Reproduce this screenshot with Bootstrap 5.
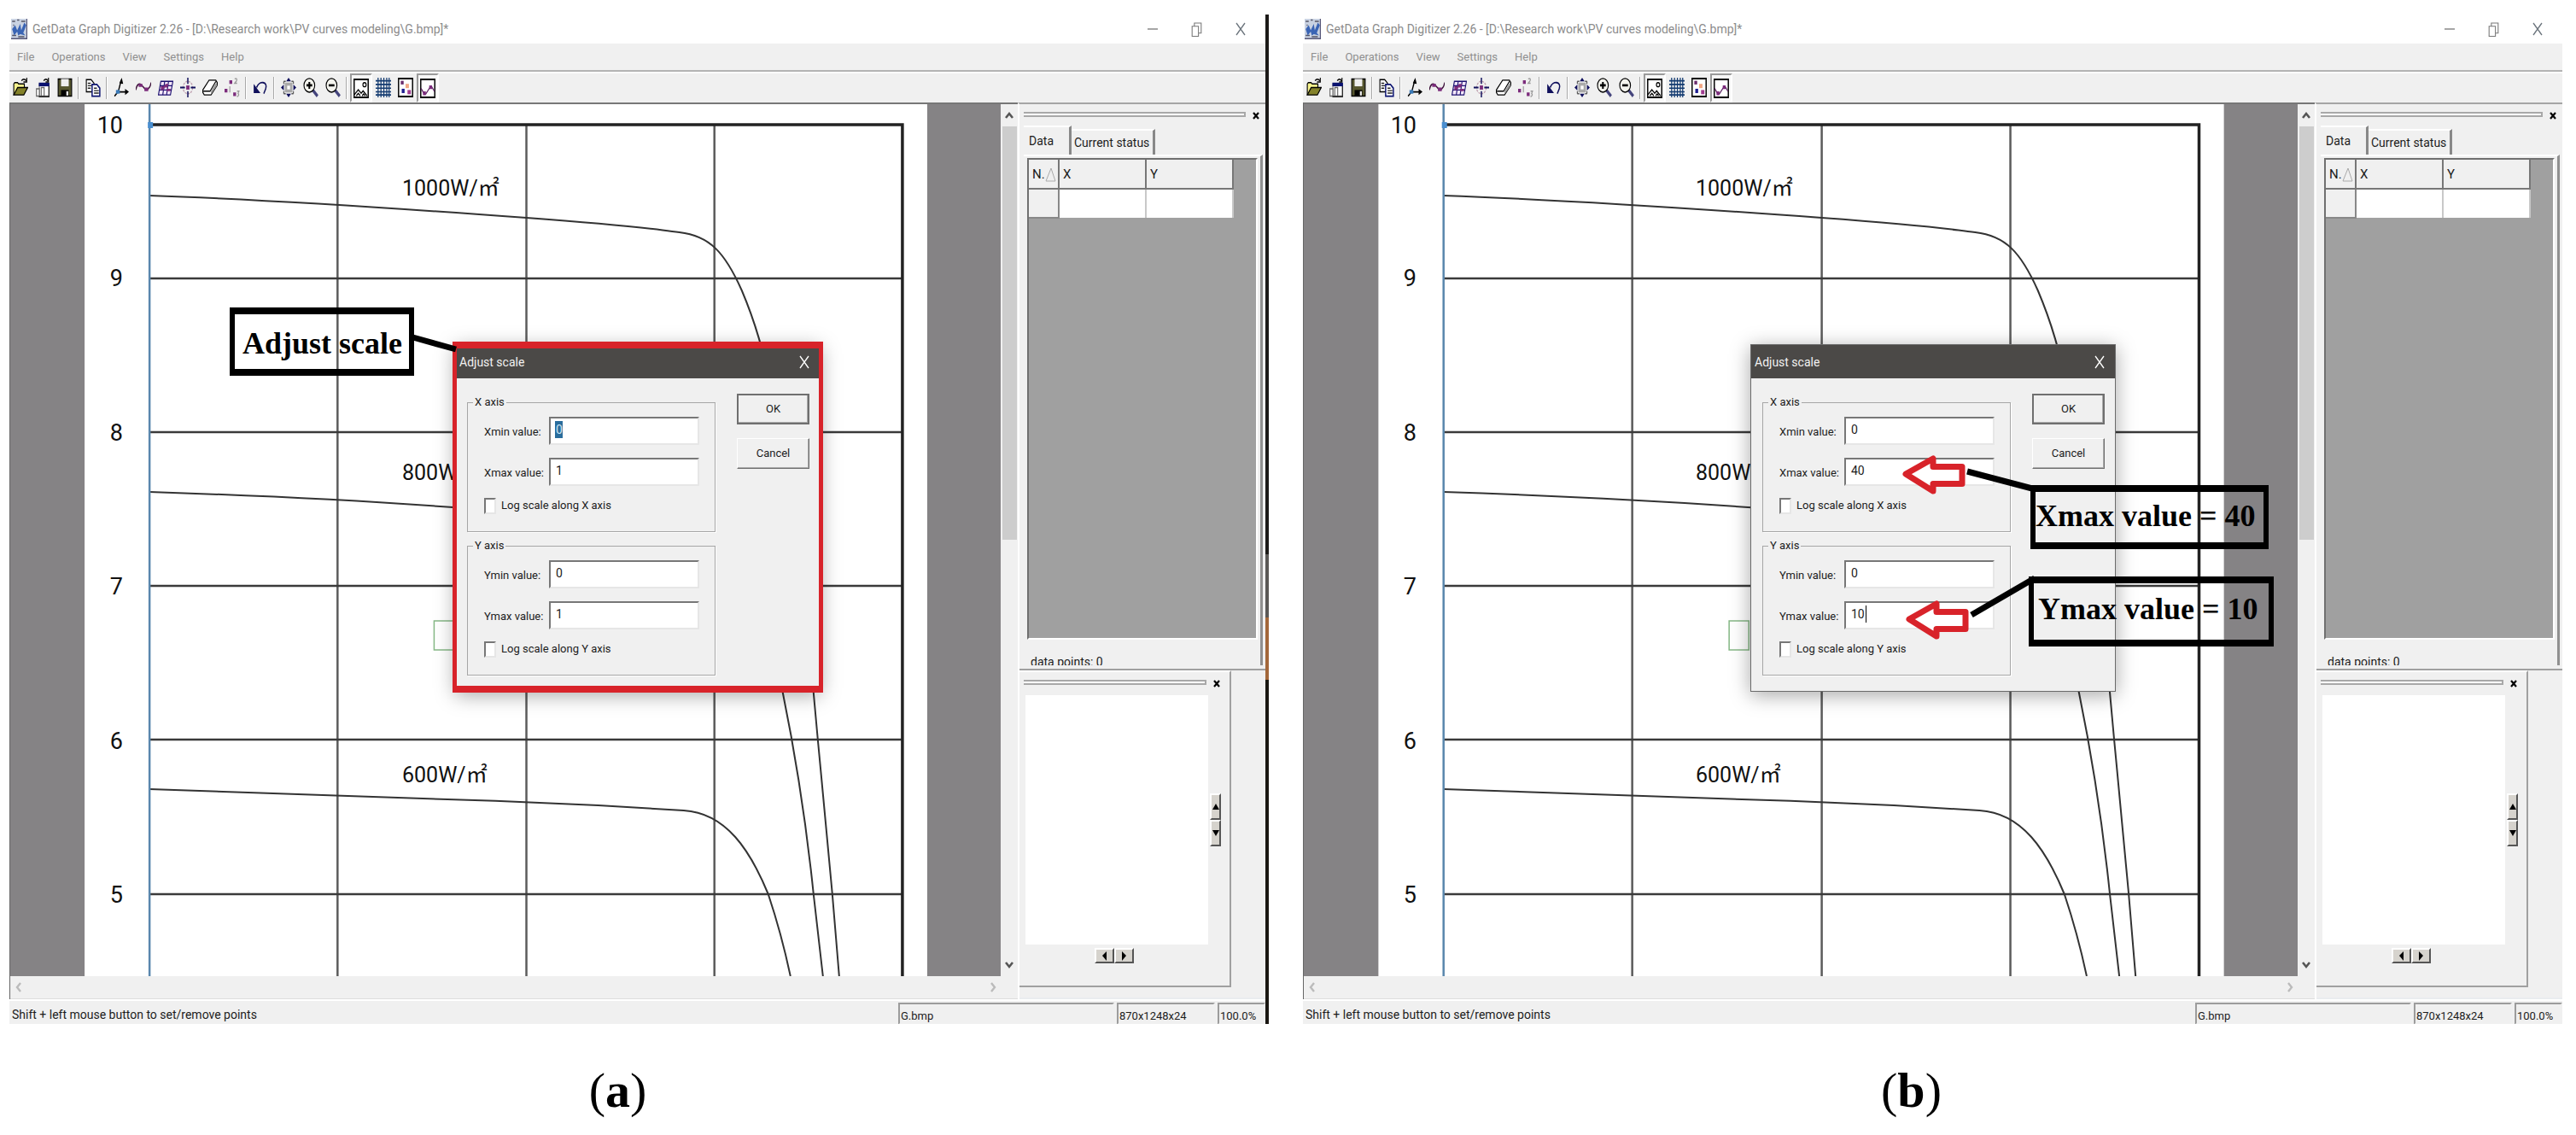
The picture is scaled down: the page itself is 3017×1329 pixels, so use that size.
<!DOCTYPE html>
<html lang="en">
<head>
<meta charset="utf-8">
<meta name="viewport" content="width=device-width, initial-scale=1">
<title>GetData Graph Digitizer – Adjust scale</title>
<link rel="stylesheet" href="https://cdn.jsdelivr.net/npm/bootstrap@5.3.0/dist/css/bootstrap.min.css">
<style>
body{font-family:Roboto,"Liberation Sans","Noto Sans CJK JP",sans-serif;color:#1c1c1c;background:#fff;line-height:20px}
.figures{padding:17px 16px 0 11px;gap:40px}
.pane{min-width:0}
.app{background:#f0f0f0}
.app-a{border-right:4px solid;border-image:linear-gradient(#1c1a18 0 632px,#5a5856 632px 706px,#a3673a 706px 779px,#1a1712 779px) 1}
.titlebar{height:34px;background:#fff;color:#8c8c8c;font-size:14px;padding:0 23px 0 2px}
.titlebar .app-icon{width:19px;height:24px;margin-right:6px}
.win-btns{gap:39px}
.win-btns button,.plain{border:0;background:none;padding:0;line-height:0}
.menubar{height:33px;border-bottom:2px solid #b4b4b4;font-size:13px;gap:20px;padding-left:9px}
.menubar a{color:#8f8f8f;text-decoration:none}
.toolbar{height:36px;border-top:2px solid #fbfbfb}
.tool{width:26px;height:34px;border:0;background:none;padding:0 0 2px;line-height:0}
.tool svg{width:18px;height:23px}
.tool.pressed{border:2px solid;border-color:#9a9a9a #fff #fff #9a9a9a;background:#f7f7f7;padding:0}
.tsep{width:2px;height:26px;margin:0 3px 0 2px;background:#a8a8a8;border-right:1px solid #fff}
.viewer{min-width:0;border-left:1px solid #666;border-top:2px solid #777}
.canvas{background:#858385;overflow:hidden;min-width:0}
.plot,.plot svg{display:block}
.vscroll{width:20px;background:#f0f0f0}
.vthumb{height:484px;width:17px;background:#cdcdcd}
.hscroll{height:27px;border-bottom:1px solid #ddd;padding:0 25px 0 6px}
.side{width:290px;border-left:2px solid #fff;border-top:2px solid #a5a5a5}
.grip{height:6px;border-top:2px solid #a8a8a8;border-bottom:2px solid #a8a8a8;border-right:2px solid #a8a8a8;background:#fff}
.side-head{padding:9px 7px 0 5px;height:25px}
.data-tabs{padding-left:5px;border:0}
.data-tabs .nav-link{border:0;border-radius:0;color:#1c1c1c;font-size:14px;line-height:20px;background:#f0f0f0;border-top:2px solid #fff;border-right:3px solid #888;padding:0 4px 0 3px;height:30px}
.data-tabs .nav-link.active{height:34px;width:56px;text-align:left;color:#1c1c1c;background:#f0f0f0;border-top:2px solid #fff;border-right:3px solid #888;padding-left:6px}
.tabpage{margin:0 3px 0 5px;border-top:2px solid #fff;border-right:3px solid #909090;overflow:hidden;height:598px;font-size:14px}
.databox{height:564px;margin:2px 3px 0 4px;background:#a0a0a0;border:2px solid;border-color:#707070 #fff #fff #707070}
.datagrid{width:239px;table-layout:fixed;border-collapse:collapse;font-size:15px;line-height:20px;margin:0;white-space:nowrap}
.datagrid th{background:#f0f0f0;height:34px;font-weight:400;padding:0 0 0 4px;border-right:2px solid #777;border-bottom:2px solid #777}
.datagrid td{background:#fff;height:34px;border-right:2px solid #c8c8c8}
.datagrid tbody th{border-color:#888}
.mag{width:248px;border-right:2px solid #a0a0a0;border-bottom:2px solid #a0a0a0;border-top:2px solid #fff}
.mag .side-head{height:27px}
.rule-top{border-top:2px solid #a0a0a0}
.magview{background:#fff;width:214px;height:292px;margin:0 2px 0 7px}
.spin{background:#d6d3cd;border:2px solid;border-color:#fff #555 #555 #fff;padding:0;line-height:0}
.spin.v{width:13px;height:31px}.spin.h{width:23px;height:18px}
.statusbar{height:29px;border-top:2px solid #fff;font-size:13px;overflow:hidden}
.statusmsg{font-size:14px;padding:5px 0 0 3px}
.cell-s{border:2px solid;border-color:#9c9c9c transparent transparent #9c9c9c;margin-top:3px;padding:4px 0 0 1px;height:26px}
.cell-1{width:253px;margin-right:3px}.cell-2{width:115px;margin-right:3px}.cell-3{width:56px}
.caption-row{height:130px;padding-right:50px;font-family:"Liberation Serif",serif;font-size:58px;line-height:56px;color:#000;padding-top:50px}
/* dialog window floating on the canvas */
.dlg{position:absolute;left:521px;top:281px;width:428px;background:#f0f0f0;border:1px solid #6a6a6a;box-shadow:0 4px 22px rgba(0,0,0,.35);font-size:13px}
.dlg-b{left:523px}
.dlg-title{background:#4b4947;color:#f2f2f2;height:39px;font-size:14px;padding:0 12px 0 4px}
.dlg-body{padding:18px 12px 18px 13px;gap:25px}
.axisbox{width:291px;border:1px solid #a6a6a6;box-shadow:1px 1px 0 #fff;padding:7px 18px 20px 6px;margin:0 0 6px;min-width:0}
.axisbox legend{float:none;width:auto;font-size:13px;line-height:20px;margin:0;padding:0 2px}
.vrow,.crow{margin-left:13px}
.vrow{height:33px;margin-bottom:15px}
.vrow+.vrow{margin-bottom:13px}
.vrow label{width:76px;padding-top:2px;white-space:nowrap}
.vrow input{width:176px;height:33px;border:2px solid;border-color:#777 #e6e6e6 #e6e6e6 #777;background:#fff;border-radius:0;padding:0 0 4px 6px;font-size:14px;color:#1c1c1c}
.vrow input.picked{background:linear-gradient(#2a6d9c,#2a6d9c) 5px 3px/9px 20px no-repeat #fff;color:#cfe6f5}
.vrow input.caret{background:linear-gradient(#000,#000) 23px 3px/1px 20px no-repeat #fff}
.crow{height:20px;gap:6px}
.crow input{appearance:none;width:14px;height:19px;margin:0;background:#fff;border:2px solid;border-color:#777 #e6e6e6 #e6e6e6 #777}
.dbtn{width:85px;height:36px;background:#f0f0f0;border:1px solid;border-color:#fff #6f6f6f #6f6f6f #fff;box-shadow:inset -1px -1px 0 #aaa;font-size:13px;color:#1c1c1c;padding:0}
.dbtn.ok{border:2px solid #6f6f6f}
.frame{position:absolute;left:518px;top:278px;width:434px;height:411px;border:solid #d8232a;border-width:8px 5px}
.note{position:absolute;border:solid #000;border-width:8px 6px;font:700 36px/64px "Liberation Serif",serif;color:#000;white-space:nowrap}
.note-adj{left:257px;top:238px;width:216px;height:80px;padding-left:9px;line-height:68px}
.note-x{left:851px;top:446px;width:279px;height:75px;line-height:56px}
.note-y{left:849px;top:553px;width:287px;height:82px;padding-left:5px;line-height:60px}
.marks{position:absolute;left:0;top:0;width:100%;height:100%;pointer-events:none}
</style>
<script src="https://cdn.jsdelivr.net/npm/bootstrap@5.3.0/dist/js/bootstrap.bundle.min.js"></script>
</head>
<body>
<svg width="0" height="0" class="position-absolute" aria-hidden="true">
<defs>
<symbol id="i-app" viewBox="0 0 16 16" preserveAspectRatio="none"><path fill="#c9d2e2" d="M0 0h16v16H0z"/><path d="M1 2h3M6 1h2M10 2h4M2 5h1M1 13h4M7 14h6" stroke="#556" fill="none"/><path d="M1 8l3-3 2 4 3-5 1 5 3-6 2 2-3 6 2 2-5-1-2 1-1-3-3 3z" fill="#3a64b4"/><path d="M15 0v15H0v1h16V0z" fill="#557"/></symbol>
<symbol id="i-open" viewBox="0 0 16 16" preserveAspectRatio="none"><path d="M1 14V5l1-1h3l1 1h6v3" fill="#f7f38c" stroke="#000"/><path d="M1 14l4-6h10.500l-4 6z" fill="#84822a" stroke="#000"/><path d="M9 2.500q2.500-2.500 5 0M14.500 0v3.500H11" fill="none" stroke="#000"/></symbol>
<symbol id="i-import" viewBox="0 0 16 16" preserveAspectRatio="none"><path d="M4.500 5h10v10h-10z" fill="#fff" stroke="#777"/><path d="M4 4h11v3H4z" fill="#0a1270"/><path d="M1.500 9h3v6h-3zM6.500 8h3v7h-3z" fill="#fff" stroke="#666"/><path d="M14.500 7v8.500H4" fill="none" stroke="#222"/><path d="M9 2.500q2.500-2.500 4.500 0M14 0v3.500H11" fill="none" stroke="#000"/></symbol>
<symbol id="i-save" viewBox="0 0 16 16" preserveAspectRatio="none"><path d="M1 1h14v14H1z" fill="#55552e" stroke="#000"/><path d="M4 1h8v6H4z" fill="#eee"/><path d="M4 10h8v5H4z" fill="#000"/><path d="M9.500 11h2v3.500h-2z" fill="#eee"/></symbol>
<symbol id="i-copy" viewBox="0 0 16 16" preserveAspectRatio="none"><path d="M1 1.500h5l3 3v7H1z" fill="#fff" stroke="#000"/><path d="M7 5.500h5l3 3v6.500H7z" fill="#fff" stroke="#0a1270" stroke-width="1.300"/><path d="M2.500 4.500h3M2.500 6.500h4M2.500 8.500h3M9 8.500h3M9 10.500h5M9 12.500h5" stroke="#222"/></symbol>
<symbol id="i-axes" viewBox="0 0 16 16" preserveAspectRatio="none"><path d="M1 15l4-4M5 11L8 2M5 11.500h9" stroke="#000" stroke-width="1.200" fill="none"/><path d="M6 4.500L8.500 0l1.500 5zM12 9l4 2.500-4 2.500z"/><path d="M2.500 10h4v3h-4z" fill="#3a7ab8"/></symbol>
<symbol id="i-curve" viewBox="0 0 16 16" preserveAspectRatio="none"><path d="M0 10c1-4 3-6 6-4s4 5 7 3 2-3 3-5" stroke="#3b1038" fill="none" stroke-width="1.200"/><path d="M3 5h4v2.500H3zM9 8h4v3H9z" fill="#7c2c7c"/></symbol>
<symbol id="i-warp" viewBox="0 0 16 16" preserveAspectRatio="none"><path d="M3 3h12.500L13 14H.5z" fill="#f4e8fa"/><path d="M3 3h12.500L13 14H.5zM2 6.500h13M1 10h13M7 3L5 14M11 3L9 14" stroke="#1c1070" fill="none"/><path d="M3 7h3l2-2h3l-1 3H7l-1 2H3zM9 9h4v2H9z" fill="#7c2c7c"/></symbol>
<symbol id="i-target" viewBox="0 0 16 16" preserveAspectRatio="none"><circle cx="8" cy="8" r="5" fill="none" stroke="#b9a" stroke-dasharray="2 1"/><path d="M8 0v5M8 11v5M0 8h5M11 8h5" stroke="#10105c" stroke-width="1.300"/><path d="M6.300 6.300h3.400v3.400H6.300z" fill="#7c2c7c"/></symbol>
<symbol id="i-eraser" viewBox="0 0 16 16" preserveAspectRatio="none"><path d="M7 2h7l1.500 2v2L9 14H2l-1.500-2v-2z" fill="#fff" stroke="#000"/><path d="M1 11h7l6-8" fill="none" stroke="#000"/><path d="M9 11l5.500-7 1 2L9 13.500z" fill="#999"/></symbol>
<symbol id="i-order" viewBox="0 0 16 16" preserveAspectRatio="none"><path d="M5 2h3v3H5zM0 9h3v3H0zM9 12h3v3H9z" fill="#7c2c7c"/><path d="M10.500 1q3-1 2 1.500L10.500 4.500H13M5.500 7v5M13 11h2l-1 2q2 1-1 2.500" stroke="#999" fill="none"/></symbol>
<symbol id="i-undo" viewBox="0 0 16 16" preserveAspectRatio="none"><path d="M4 8c3-6 12-5 9.500 1l-2 4" stroke="#10105c" stroke-width="1.300" fill="none"/><path d="M1 5v7.500h7z" fill="#10105c"/></symbol>
<symbol id="i-pan" viewBox="0 0 16 16" preserveAspectRatio="none"><path d="M8 0l2.500 3h-5zM8 16l2.500-3h-5zM0 8l3-2.500v5zM16 8l-3-2.500v5z" fill="#10105c"/><path d="M4 4h8v8H4z" fill="#aaa"/><path d="M6.500 6.500h3v3h-3z" fill="#fff"/><path d="M3 3h2M3 3v2M13 3h-2M13 3v2M3 13h2M3 13v-2M13 13h-2M13 13v-2" stroke="#555"/></symbol>
<symbol id="i-zin" viewBox="0 0 16 16" preserveAspectRatio="none"><path d="M10 10l5 5" stroke="#44447c" stroke-width="2.600"/><circle cx="6.500" cy="6.200" r="5.600" fill="#f4f4ee" stroke="#000"/><path d="M3.500 6.200h6M6.500 3.500v5.500" stroke="#000" stroke-width="1.800"/></symbol>
<symbol id="i-zout" viewBox="0 0 16 16" preserveAspectRatio="none"><path d="M10 10l5 5" stroke="#44447c" stroke-width="2.600"/><circle cx="6.500" cy="6.200" r="5.600" fill="#f4f4ee" stroke="#000"/><path d="M3.500 6.200h6" stroke="#000" stroke-width="1.800"/></symbol>
<symbol id="i-image" viewBox="0 0 16 16" preserveAspectRatio="none"><path d="M.7.7h14.600v14.600H.7z" fill="#fff" stroke="#000" stroke-width="1.300"/><circle cx="11.500" cy="5" r="1.700" fill="none" stroke="#000"/><path d="M1 13l4-4 3 3 2-2 4 4M3 14l2-2 2 2M9 14l1.500-1.500L12 14" stroke="#000" fill="none"/></symbol>
<symbol id="i-hatch" viewBox="0 0 16 16" preserveAspectRatio="none"><path d="M2.500 0v16M5.500 0v16M8.500 0v16M11.500 0v16M14 0v16M0 2.500h16M0 5.500h16M0 8.500h16M0 11.500h16M0 14h16" stroke="#123a70" fill="none" stroke-width="1.100"/></symbol>
<symbol id="i-scatter" viewBox="0 0 16 16" preserveAspectRatio="none"><path d="M.7.7h14.600v14.600H.7z" fill="#fff" stroke="#000" stroke-width="1.300"/><path d="M3 2.500h3v3H3z" fill="#6a2c6c"/><path d="M8 5h3.500v3.500H8z" fill="#f2a684"/><path d="M4 9h3v3.500H4z" fill="#1c1c90"/><path d="M10 10h3.500v3.500H10z" fill="#a03c90"/></symbol>
<symbol id="i-plot" viewBox="0 0 16 16" preserveAspectRatio="none"><path d="M.7.7h14.600v14.600H.7z" fill="#fff" stroke="#000" stroke-width="1.300"/><path d="M1 8l3 4 2 .5 4-5 2-1 3 4" fill="none" stroke="#5a2060"/><path d="M3 10.500h3v3H3zM9.500 5.500h3v3h-3z" fill="#7c2c7c"/></symbol>
<symbol id="i-min" viewBox="0 0 12 16"><path d="M0 8h12" stroke="#888" stroke-width="1.500"/></symbol>
<symbol id="i-restore" viewBox="0 0 12 16"><path d="M1 4.500h7v11H1zM3.500 4V1H11v11H8.500" fill="none" stroke="#777"/></symbol>
<symbol id="i-x" viewBox="0 0 12 16"><path d="M1 1l10 14M11 1L1 15" stroke="currentColor" stroke-width="1.300" fill="none"/></symbol>
<symbol id="i-bx" viewBox="0 0 8 9"><path d="M1 1l6 7M7 1L1 8" stroke="#000" stroke-width="2.200" fill="none"/></symbol>
<symbol id="i-up" viewBox="0 0 10 10"><path d="M1 8l4-5 4 5" fill="none" stroke="#555" stroke-width="2.600"/></symbol>
<symbol id="i-down" viewBox="0 0 10 10"><path d="M1 2l4 5 4-5" fill="none" stroke="#555" stroke-width="2.600"/></symbol>
<symbol id="i-left" viewBox="0 0 8 12"><path d="M6 1L2 6l4 5" fill="none" stroke="#bbb" stroke-width="2.400"/></symbol>
<symbol id="i-right" viewBox="0 0 8 12"><path d="M2 1l4 5-4 5" fill="none" stroke="#bbb" stroke-width="2.400"/></symbol>
<!-- grid and IV curves, stretched with the canvas -->
<symbol id="lines" viewBox="12 122 1159 1021" preserveAspectRatio="none">
<path fill="#fff" d="M99 122h986v1021H99z"/>
<path d="M395 146v997M616 146v997M836 146v997" stroke="#5c5c5c" stroke-width="2.500" fill="none"/>
<path d="M175 326h881M175 506h881M175 686h881M175 866h881M175 1047h881" stroke="#3a3a3a" stroke-width="2.500" fill="none"/>
<path d="M175 146h881v997" stroke="#222" stroke-width="3.500" fill="none"/>
<g fill="none" stroke="#333" stroke-width="2">
<path d="M175 229C320 234 480 245 616 255S760 268 795 272C830 276 848 295 868 340C885 380 893 412 903 455C925 560 945 700 952 811L957 866C963 930 970 1000 974 1047L982 1143"/>
<path d="M175 576C300 580 420 586 530 594S760 610 798 616C850 624 890 700 916 811C926 860 942 950 952 1047L963 1143"/>
<path d="M175 924C330 928 520 935 700 943L800 949C850 952 878 996 899 1047C908 1074 918 1110 925 1143"/>
</g>
<path d="M175 122v1021" stroke="#5a87ad" stroke-width="2.500"/>
<path d="M173 143h6v7h-6z" fill="#4a8fd0"/>
<path d="M508 727h23v34h-23z" fill="none" stroke="#86b886" stroke-width="1.500"/>
</symbol>
<symbol id="arrow" viewBox="0 0 80 50"><path d="M6 25L38 7v9.500h34v20H38V45z" fill="#fff" stroke="#d8232a" stroke-width="7" stroke-linejoin="round"/></symbol>
</defs>
</svg>

<main class="figures d-flex vh-100">
<section class="pane flex-fill d-flex flex-column w-50" id="figA">
<div class="app app-a flex-fill d-flex flex-column">
  <header class="titlebar d-flex align-items-center">
    <svg class="app-icon"><use href="#i-app"/></svg><span>GetData Graph Digitizer 2.26 - [D:\Research work\PV curves modeling\G.bmp]*</span>
    <div class="win-btns ms-auto d-flex align-items-center"><button aria-label="Minimize"><svg width="12" height="16"><use href="#i-min"/></svg></button><button aria-label="Restore"><svg width="13" height="17"><use href="#i-restore"/></svg></button><button aria-label="Close" class="text-secondary"><svg width="12" height="16"><use href="#i-x"/></svg></button></div>
  </header>
  <nav class="menubar d-flex align-items-center"><a href="#">File</a><a href="#">Operations</a><a href="#">View</a><a href="#">Settings</a><a href="#">Help</a></nav>
  <div class="toolbar d-flex align-items-center" role="toolbar" aria-label="Tools">
    <button class="tool" aria-label="Open"><svg><use href="#i-open"/></svg></button><button class="tool" aria-label="Import"><svg><use href="#i-import"/></svg></button><button class="tool" aria-label="Save"><svg><use href="#i-save"/></svg></button><span class="tsep"></span>
    <button class="tool" aria-label="Copy"><svg><use href="#i-copy"/></svg></button><span class="tsep"></span>
    <button class="tool" aria-label="Set scale"><svg><use href="#i-axes"/></svg></button><button class="tool" aria-label="Trace curve"><svg><use href="#i-curve"/></svg></button><button class="tool" aria-label="Digitize area"><svg><use href="#i-warp"/></svg></button><button class="tool" aria-label="Capture point"><svg><use href="#i-target"/></svg></button><button class="tool" aria-label="Eraser"><svg><use href="#i-eraser"/></svg></button><button class="tool" aria-label="Reorder"><svg><use href="#i-order"/></svg></button><span class="tsep"></span>
    <button class="tool" aria-label="Undo"><svg><use href="#i-undo"/></svg></button><span class="tsep"></span>
    <button class="tool" aria-label="Pan"><svg><use href="#i-pan"/></svg></button><button class="tool" aria-label="Zoom in"><svg><use href="#i-zin"/></svg></button><button class="tool" aria-label="Zoom out"><svg><use href="#i-zout"/></svg></button><span class="tsep"></span>
    <button class="tool pressed" aria-label="Show image"><svg><use href="#i-image"/></svg></button><button class="tool" aria-label="Show grid"><svg><use href="#i-hatch"/></svg></button><button class="tool" aria-label="Show points"><svg><use href="#i-scatter"/></svg></button><button class="tool pressed" aria-label="Show lines"><svg><use href="#i-plot"/></svg></button>
  </div>
  <div class="flex-fill d-flex">
    <div class="viewer flex-fill d-flex flex-column">
      <div class="flex-fill d-flex">
        <div class="canvas flex-fill position-relative">
          <svg class="plot position-absolute w-100 h-100" font-size="27" fill="#111">
            <use href="#lines" width="100%" height="100%"/>
            <g transform="translate(-12 -122)"><g text-anchor="end"><text x="144" y="156">10</text><text x="144" y="335">9</text><text x="144" y="516">8</text><text x="144" y="696">7</text><text x="144" y="877">6</text><text x="144" y="1057">5</text></g><text x="471" y="229" font-size="25">1000W/㎡</text><text x="471" y="562" font-size="25">800W/</text><text x="471" y="916" font-size="25">600W/㎡</text></g>
          </svg>
          <div class="dlg" role="dialog" aria-label="Adjust scale">
            <div class="dlg-title d-flex align-items-center justify-content-between"><span>Adjust scale</span><button class="plain text-white" aria-label="Close"><svg width="12" height="16"><use href="#i-x"/></svg></button></div>
            <form class="dlg-body d-flex align-items-start">
              <div>
                <fieldset class="axisbox"><legend>X axis</legend>
                  <div class="vrow d-flex align-items-center"><label for="a1">Xmin value:</label><input id="a1" class="picked" value="0"></div>
                  <div class="vrow d-flex align-items-center"><label for="a2">Xmax value:</label><input id="a2" value="1"></div>
                  <div class="crow d-flex align-items-center"><input type="checkbox" id="a3"><label for="a3">Log scale along X axis</label></div>
                </fieldset>
                <fieldset class="axisbox mb-0"><legend>Y axis</legend>
                  <div class="vrow d-flex align-items-center"><label for="a4">Ymin value:</label><input id="a4" value="0"></div>
                  <div class="vrow d-flex align-items-center"><label for="a5">Ymax value:</label><input id="a5" value="1"></div>
                  <div class="crow d-flex align-items-center"><input type="checkbox" id="a6"><label for="a6">Log scale along Y axis</label></div>
                </fieldset>
              </div>
              <div class="d-grid gap-3"><button type="button" class="dbtn ok">OK</button><button type="button" class="dbtn">Cancel</button></div>
            </form>
          </div>
          <div class="callouts">
            <div class="frame"></div>
            <div class="note note-adj">Adjust scale</div>
            <svg class="marks"><path d="M468 272l54 15" stroke="#000" stroke-width="7" fill="none"/></svg>
          </div>
        </div>
        <div class="vscroll d-flex flex-column align-items-center"><svg width="10" height="10" class="my-2"><use href="#i-up"/></svg><div class="vthumb"></div><svg width="10" height="10" class="mt-auto mb-2"><use href="#i-down"/></svg></div>
      </div>
      <div class="hscroll d-flex align-items-center justify-content-between"><svg width="8" height="12"><use href="#i-left"/></svg><svg width="8" height="12"><use href="#i-right"/></svg></div>
    </div>
    <aside class="side d-flex flex-column">
      <div class="side-head d-flex align-items-start"><div class="grip flex-fill me-2"></div><button class="plain" aria-label="Close panel"><svg width="8" height="9"><use href="#i-bx"/></svg></button></div>
      <div class="nav data-tabs align-items-end"><button class="nav-link active">Data</button><button class="nav-link">Current status</button></div>
      <div class="tabpage">
        <div class="databox"><table class="datagrid"><colgroup><col width="35"><col width="102"><col width="102"></colgroup><thead><tr><th>N.<svg width="13" height="17" viewBox="0 0 13 17"><path d="M1 16L7 1l5 15z" fill="none" stroke="#aaa"/></svg></th><th>X</th><th>Y</th></tr></thead><tbody><tr><th></th><td></td><td></td></tr></tbody></table></div>
        <div class="ps-2 pt-3">data points: 0</div>
      </div>
      <div class="rule-top mt-1 flex-fill d-flex flex-column">
        <div class="mag flex-fill d-flex flex-column">
          <div class="side-head d-flex align-items-start"><div class="grip flex-fill me-2"></div><button class="plain me-1" aria-label="Close magnifier"><svg width="8" height="9"><use href="#i-bx"/></svg></button></div>
          <div class="d-flex align-items-center"><div class="magview"></div><div class="d-flex flex-column"><button class="spin v" aria-label="Up"><svg width="8" height="7"><path d="M0 7l4-7 4 7z"/></svg></button><button class="spin v" aria-label="Down"><svg width="8" height="7"><path d="M0 0h8L4 7z"/></svg></button></div></div>
          <div class="d-flex justify-content-center mt-1 pe-4"><button class="spin h" aria-label="Left"><svg width="5" height="11"><path d="M5 0v11L0 5z"/></svg></button><button class="spin h" aria-label="Right"><svg width="5" height="11"><path d="M0 0v11l5-6z"/></svg></button></div>
        </div>
        <div class="border-bottom border-2 pt-2 mt-1 border-secondary-subtle"></div>
      </div>
    </aside>
  </div>
  <footer class="statusbar d-flex align-items-center"><span class="statusmsg me-auto">Shift + left mouse button to set/remove points</span><span class="cell-s cell-1">G.bmp</span><span class="cell-s cell-2">870x1248x24</span><span class="cell-s cell-3">100.0%</span></footer>
</div>
<div class="caption-row text-center">(<b>a</b>)</div>
</section>
</main>

<template id="calloutsB">
  <div class="note note-x">Xmax value = 40</div>
  <div class="note note-y">Ymax value = 10</div>
  <svg class="marks"><path d="M777 430l76 20M782 598l74-43" stroke="#000" stroke-width="7" fill="none"/><use href="#arrow" x="699" y="408" width="80" height="50"/><use href="#arrow" x="703" y="578" width="80" height="50"/></svg>
</template>
<script>
// Figure (b) is the same window with the scale filled in and its own callouts.
const figB = document.getElementById('figA').cloneNode(true);
figB.id = 'figB';
figB.querySelector('.app').classList.remove('app-a');
figB.querySelector('.dlg').classList.add('dlg-b');
figB.querySelectorAll('input').forEach(el => { el.id = el.id.replace('a', 'b'); });
figB.querySelectorAll('label').forEach(el => { el.htmlFor = el.htmlFor.replace('a', 'b'); });
figB.querySelector('#b1').classList.remove('picked');
figB.querySelector('#b2').setAttribute('value', '40');
figB.querySelector('#b5').setAttribute('value', '10');
figB.querySelector('#b5').classList.add('caret');
figB.querySelector('.callouts').replaceChildren(document.getElementById('calloutsB').content.cloneNode(true));
figB.querySelector('.caption-row b').textContent = 'b';
document.querySelector('main').append(figB);
</script>
</body>
</html>
